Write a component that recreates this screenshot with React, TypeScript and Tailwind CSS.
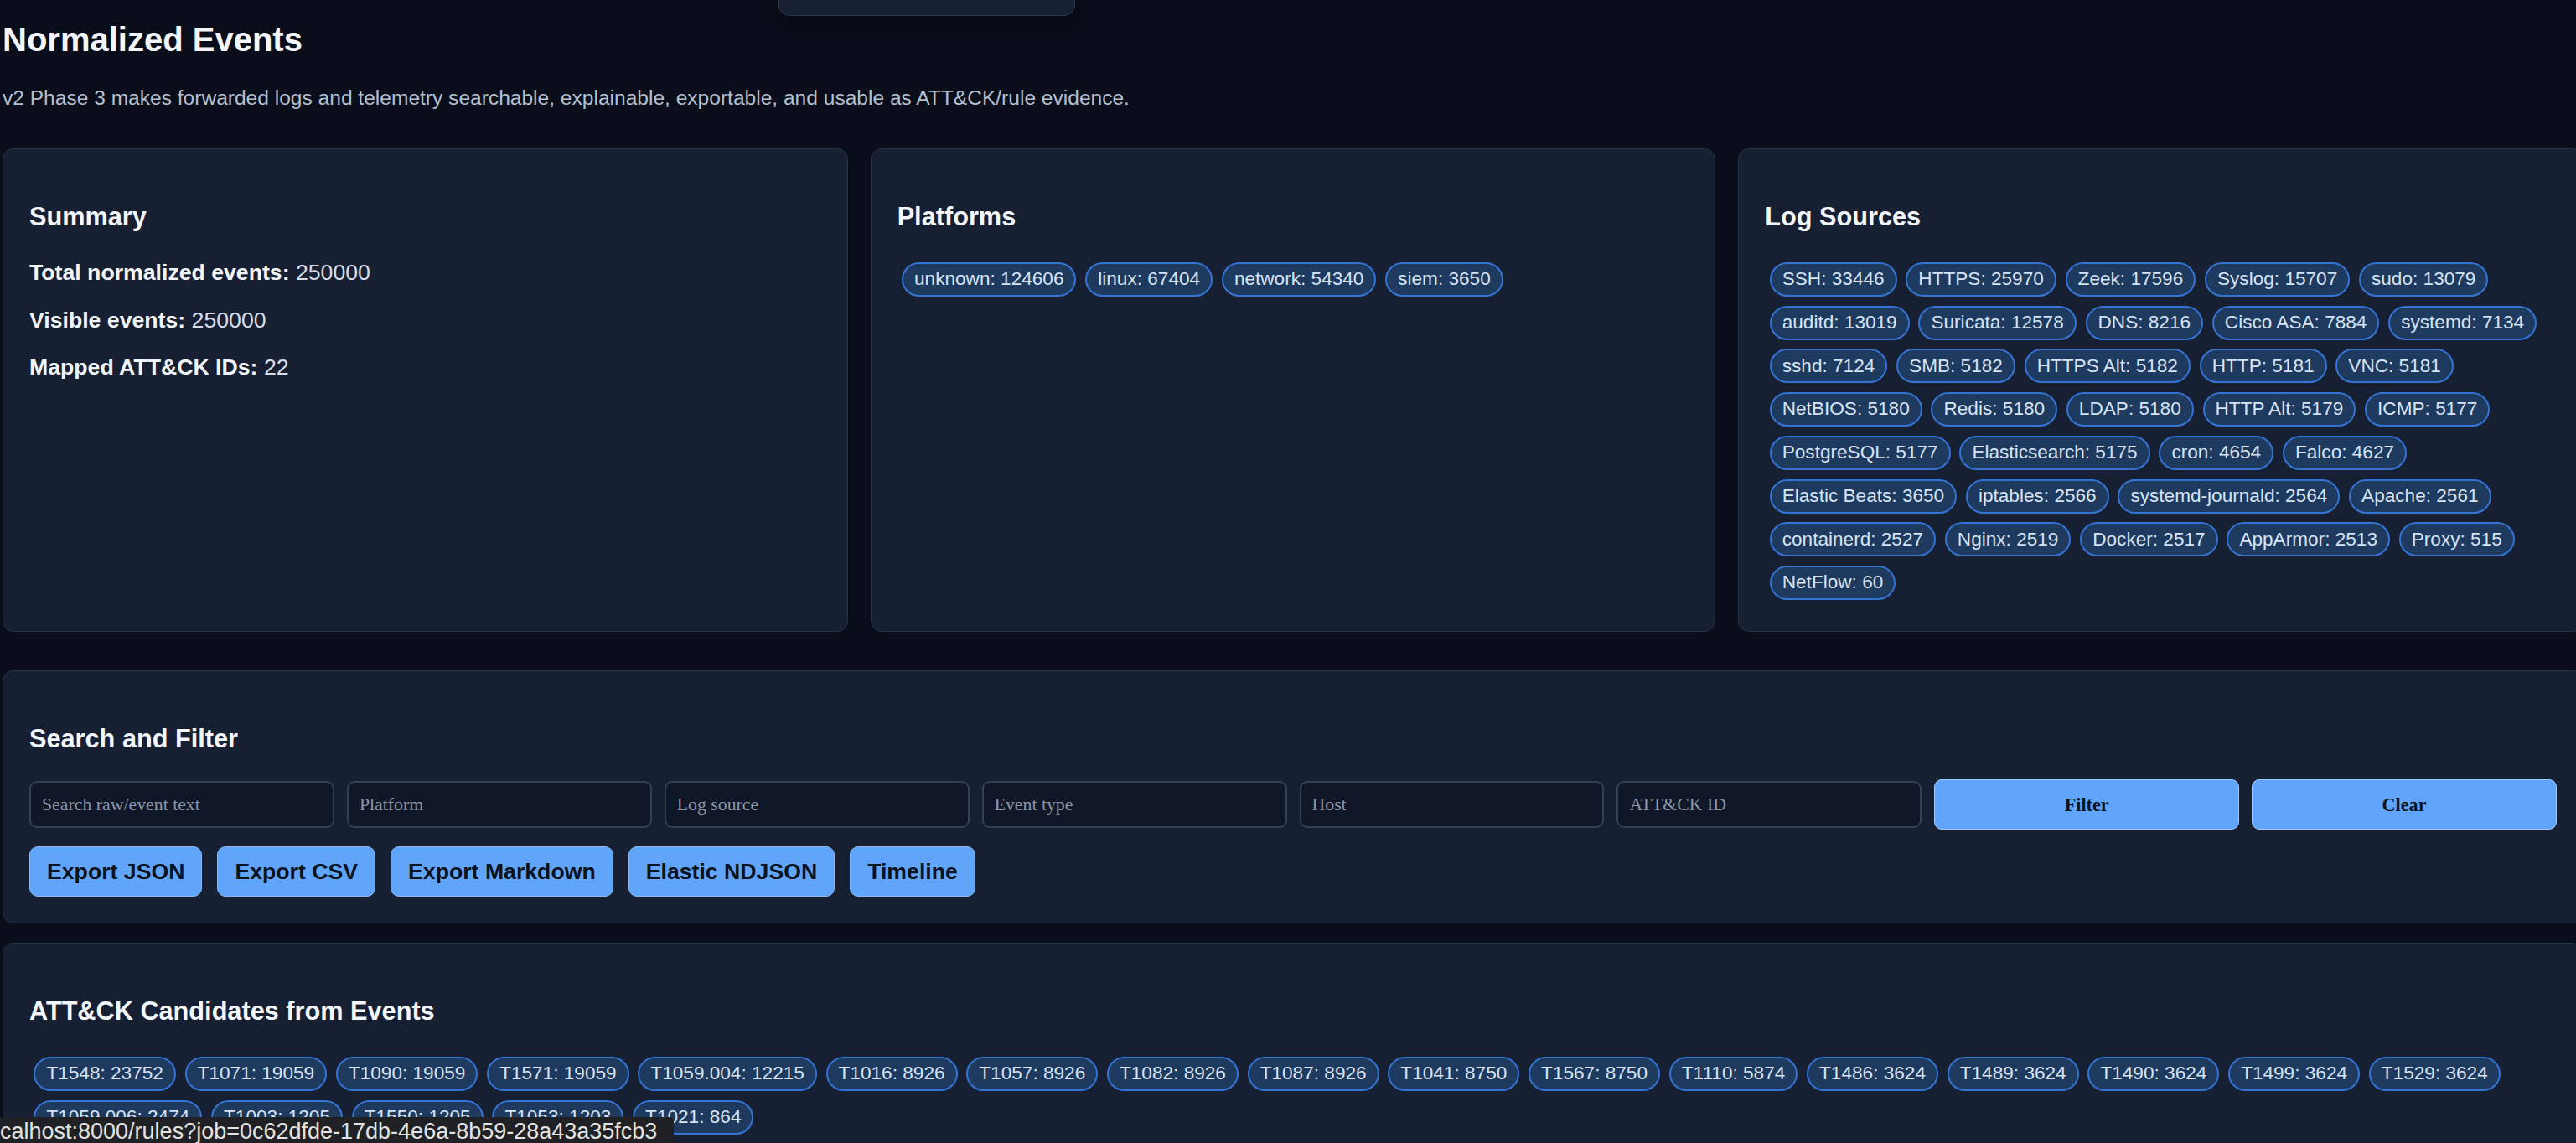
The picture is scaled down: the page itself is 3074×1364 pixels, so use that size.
import React from 'react';

const platforms = [
  ['unknown', 124606],
  ['linux', 67404],
  ['network', 54340],
  ['siem', 3650],
];

const logSources = [
  ['SSH', 33446], ['HTTPS', 25970], ['Zeek', 17596], ['Syslog', 15707], ['sudo', 13079],
  ['auditd', 13019], ['Suricata', 12578], ['DNS', 8216], ['Cisco ASA', 7884], ['systemd', 7134],
  ['sshd', 7124], ['SMB', 5182], ['HTTPS Alt', 5182], ['HTTP', 5181], ['VNC', 5181],
  ['NetBIOS', 5180], ['Redis', 5180], ['LDAP', 5180], ['HTTP Alt', 5179], ['ICMP', 5177],
  ['PostgreSQL', 5177], ['Elasticsearch', 5175], ['cron', 4654], ['Falco', 4627],
  ['Elastic Beats', 3650], ['iptables', 2566], ['systemd-journald', 2564], ['Apache', 2561],
  ['containerd', 2527], ['Nginx', 2519], ['Docker', 2517], ['AppArmor', 2513], ['Proxy', 515],
  ['NetFlow', 60],
];

const techniques = [
  ['T1548', 23752], ['T1071', 19059], ['T1090', 19059], ['T1571', 19059], ['T1059.004', 12215],
  ['T1016', 8926], ['T1057', 8926], ['T1082', 8926], ['T1087', 8926], ['T1041', 8750],
  ['T1567', 8750], ['T1110', 5874], ['T1486', 3624], ['T1489', 3624], ['T1490', 3624],
  ['T1499', 3624], ['T1529', 3624], ['T1059.006', 2474], ['T1003', 1205], ['T1550', 1205],
  ['T1053', 1203], ['T1021', 864],
];

const filterFields = ['Search raw/event text', 'Platform', 'Log source', 'Event type', 'Host', 'ATT&CK ID'];
const exportButtons = ['Export JSON', 'Export CSV', 'Export Markdown', 'Elastic NDJSON', 'Timeline'];

const Chip: React.FC<{ label: string; value: number }> = ({ label, value }) => (
  <span className="m-[5.4px] inline-flex h-[41px] items-center whitespace-nowrap rounded-full border-2 border-[#3474d4] bg-[#1e3a5f] px-[13px] text-[22.6px] leading-none text-[#d8e3f3]">
    {label}: {value}
  </span>
);

const Card: React.FC<{ title: string; className?: string; children: React.ReactNode }> = ({ title, className, children }) => (
  <section className={`rounded-[13px] border border-[#263349] bg-[#172033] px-[31px] pb-[31px] pt-[63px] ${className ?? ''}`}>
    <h2 className="text-[30.7px] font-bold leading-[36px] text-[#f3f6fa]">{title}</h2>
    {children}
  </section>
);

const ChipList: React.FC<{ items: (string | number)[][] }> = ({ items }) => (
  <div className="mt-[30.4px] flex flex-wrap content-start">
    {items.map(([label, value]) => (
      <Chip key={label as string} label={label as string} value={value as number} />
    ))}
  </div>
);

export default function App() {
  return (
    <div className="relative h-[1364px] w-full overflow-hidden bg-[#0a0e1b] font-['Liberation_Sans',Arial,sans-serif]">
      <div className="ml-[3px] w-[3080px] pt-[24px]">
        <h1 className="text-[40px] font-bold leading-[46px] text-[#f4f6fb]">Normalized Events</h1>
        <p className="mt-[33px] text-[24.55px] leading-[28px] text-[#b4bfcf]">
          v2 Phase 3 makes forwarded logs and telemetry searchable, explainable, exportable, and usable as ATT&amp;CK/rule evidence.
        </p>

        <div className="mt-[46px] grid grid-cols-3 gap-[27px]">
          <Card title="Summary">
            <div className="mt-[33px] flex flex-col gap-[26.7px] text-[26.67px] leading-[30px] text-[#d6dde8]">
              <p><span className="font-bold text-[#f1f5f9]">Total normalized events:</span> 250000</p>
              <p><span className="font-bold text-[#f1f5f9]">Visible events:</span> 250000</p>
              <p><span className="font-bold text-[#f1f5f9]">Mapped ATT&amp;CK IDs:</span> 22</p>
            </div>
          </Card>
          <Card title="Platforms">
            <ChipList items={platforms} />
          </Card>
          <Card title="Log Sources">
            <ChipList items={logSources} />
          </Card>
        </div>

        <Card title="Search and Filter" className="mt-[46px]">
          <div className="mt-[30.7px] grid grid-cols-8 items-center gap-[15px]">
            {filterFields.map((field) => (
              <input
                key={field}
                placeholder={field}
                className="h-[56px] w-full rounded-[9px] border-2 border-[#334156] bg-[#0f1729] px-[13px] font-['Liberation_Serif',serif] text-[21.8px] text-[#e2e8f0] outline-none placeholder:text-[#8c95a5]"
              />
            ))}
            <button className="h-[60px] rounded-[9px] border border-[#9ecbfc] bg-[#60a5fa] font-['Liberation_Serif',serif] text-[22.2px] font-bold text-[#0b1220]">
              Filter
            </button>
            <button className="h-[60px] rounded-[9px] border border-[#9ecbfc] bg-[#60a5fa] font-['Liberation_Serif',serif] text-[22.2px] font-bold text-[#0b1220]">
              Clear
            </button>
          </div>
          <div className="mt-[20px] flex gap-[18px]">
            {exportButtons.map((label) => (
              <a
                key={label}
                className="flex h-[60px] items-center rounded-[10px] border border-[#8ab9f5] bg-[#60a5fa] px-[20px] text-[26.67px] font-bold text-[#0b1220]"
              >
                {label}
              </a>
            ))}
          </div>
        </Card>

        <Card title="ATT&CK Candidates from Events" className="mt-[23px]">
          <ChipList items={techniques} />
        </Card>
      </div>

      {/* cut-off popover at the top edge */}
      <div className="absolute left-[929px] top-[-20px] h-[39px] w-[354px] rounded-b-[13px] border border-[#2a3851] bg-[#182133] shadow-[0_10px_24px_rgba(0,0,0,0.45)]" />

      {/* browser link status bubble */}
      <div className="absolute bottom-0 left-0 h-[31px] w-[804px] overflow-hidden whitespace-nowrap rounded-tr-[4px] bg-[#202124] pt-[2px] text-[27px] leading-[31px] text-[#e3e3e3]">
        calhost:8000/rules?job=0c62dfde-17db-4e6a-8b59-28a43a35fcb3
      </div>
    </div>
  );
}
